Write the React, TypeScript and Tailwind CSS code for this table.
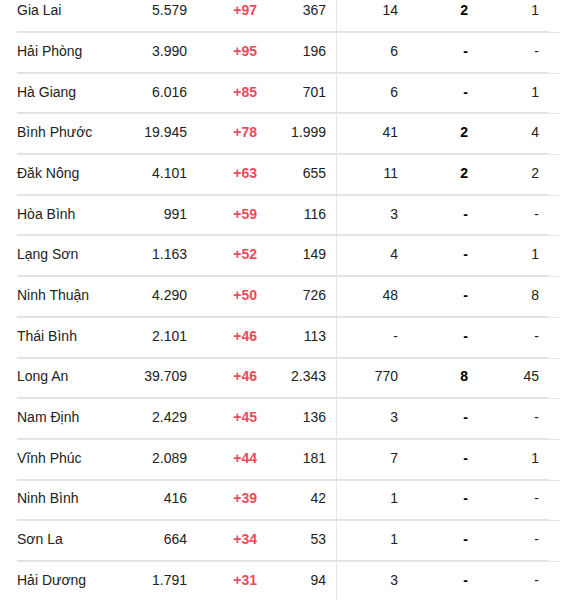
const rows: [string, string, string, string, string, string, string][] = [
  ["Gia Lai", "5.579", "+97", "367", "14", "2", "1"],
  ["Hải Phòng", "3.990", "+95", "196", "6", "-", "-"],
  ["Hà Giang", "6.016", "+85", "701", "6", "-", "1"],
  ["Bình Phước", "19.945", "+78", "1.999", "41", "2", "4"],
  ["Đăk Nông", "4.101", "+63", "655", "11", "2", "2"],
  ["Hòa Bình", "991", "+59", "116", "3", "-", "-"],
  ["Lạng Sơn", "1.163", "+52", "149", "4", "-", "1"],
  ["Ninh Thuận", "4.290", "+50", "726", "48", "-", "8"],
  ["Thái Bình", "2.101", "+46", "113", "-", "-", "-"],
  ["Long An", "39.709", "+46", "2.343", "770", "8", "45"],
  ["Nam Định", "2.429", "+45", "136", "3", "-", "-"],
  ["Vĩnh Phúc", "2.089", "+44", "181", "7", "-", "1"],
  ["Ninh Bình", "416", "+39", "42", "1", "-", "-"],
  ["Sơn La", "664", "+34", "53", "1", "-", "-"],
  ["Hải Dương", "1.791", "+31", "94", "3", "-", "-"],
];

const cell = "flex items-center justify-end pr-[10px] pb-[2px] border-b border-[#e2e2e2]";

export default function App() {
  return (
    <div
      className="w-[571px] h-[600px] overflow-hidden bg-white text-[14px] text-[#222]"
      style={{ fontFamily: '"Liberation Sans", Arial, sans-serif' }}
    >
      <div className="mt-[-7.7px] pl-[17px] w-[560px]">
        {rows.map((r, i) => (
          <div key={i} className="flex h-[40.7px] border-b border-[#e6e6e6]">
            <div className="w-[110px] flex items-center pb-[2px] border-b border-[#e2e2e2]">{r[0]}</div>
            <div className={`w-[70px] ${cell}`}>{r[1]}</div>
            <div className={`w-[70px] ${cell} font-bold text-[#ec4a5a]`}>{r[2]}</div>
            <div className={`w-[70px] ${cell} border-r border-r-[#e6e6e6]`}>{r[3]}</div>
            <div className={`w-[71px] ${cell}`}>{r[4]}</div>
            <div className={`w-[70px] ${cell} font-bold text-black`}>{r[5]}</div>
            <div className={`w-[71px] ${cell}`}>{r[6]}</div>
          </div>
        ))}
      </div>
    </div>
  );
}
